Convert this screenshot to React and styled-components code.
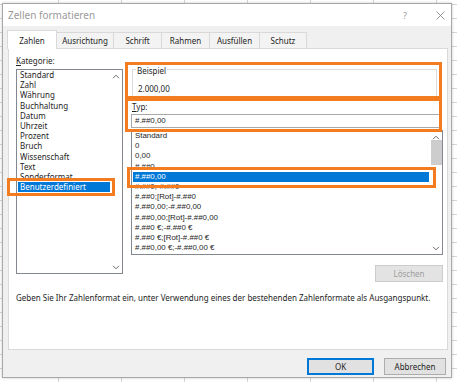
import React from 'react';
import styled, { createGlobalStyle } from 'styled-components';

const GlobalStyle = createGlobalStyle`
  html, body { margin: 0; padding: 0; }
  body {
    font-family: "Noto Sans", "Liberation Sans", sans-serif;
    color: #1e1e1e;
    -webkit-font-smoothing: antialiased;
  }
`;

const Sheet = styled.div`
  position: relative;
  width: 457px;
  height: 382px;
  box-sizing: border-box;
  padding: 3px 5px 4px 2px;
  overflow: hidden;
  background-color: #fff;
  background-image:
    repeating-linear-gradient(90deg, transparent 0 58px, #d6d6d6 58px 59px, transparent 59px 63px),
    repeating-linear-gradient(0deg, transparent 0 13px, #d6d6d6 13px 14px);
  display: flex;
`;

const Dialog = styled.div`
  flex: 1;
  display: flex;
  flex-direction: column;
  background: #f0f0f0;
  border: 1px solid #a8a8a8;
  box-shadow: 0 0 3px rgba(0, 0, 0, 0.2);
`;

const TitleBar = styled.div`
  height: 22px;
  background: #fff;
  display: flex;
  align-items: center;
  padding: 0 6px 0 5px;
`;

const Title = styled.div`
  flex: 1;
  font-size: 10px;
  color: #9b9b9b;
`;

const Help = styled.span`
  font-size: 9px;
  color: #a0a0a0;
  margin-right: 29px;
`;

const Tabs = styled.div`
  display: flex;
  align-items: flex-end;
  margin-top: 4px;
  padding-left: 5px;
  height: 18px;
  position: relative;
  z-index: 1;
`;

const Tab = styled.div`
  box-sizing: border-box;
  width: ${p => p.$w}px;
  height: ${p => (p.$active ? 19 : 16)}px;
  margin-bottom: ${p => (p.$active ? -1 : 0)}px;
  display: flex;
  align-items: center;
  justify-content: center;
  font-size: 8px;
  background: ${p => (p.$active ? '#fff' : '#f3f3f3')};
  border: 1px solid #d9d9d9;
  border-bottom: none;
  margin-left: -1px;
`;

const Panel = styled.div`
  height: 302px;
  box-sizing: border-box;
  margin: 0 3px 0 5px;
  background: #fff;
  border: 1px solid #d9d9d9;
  padding: 6px 4px 0 7px;
`;

const Columns = styled.div`
  display: grid;
  grid-template-columns: 107px 312px;
  column-gap: 8px;
`;

const Column = styled.div`
  display: flex;
  flex-direction: column;
`;

const Label = styled.div`
  font-size: 8px;
  line-height: 11px;
  height: 11px;
  margin-top: ${p => p.$mt || 0}px;
  margin-bottom: ${p => p.$mb || 0}px;
  padding-left: ${p => p.$pl || 0}px;
  u { text-decoration: underline; }
`;

const ListBox = styled.div`
  position: relative;
  box-sizing: border-box;
  height: ${p => p.$h}px;
  border: 1px solid #828790;
  display: flex;
  background: #fff;
`;

const Rows = styled.div`
  flex: 1;
  padding: 0 1px;
  overflow: hidden;
`;

const Row = styled.div`
  height: 10.2px;
  line-height: 10.2px;
  padding-left: 2px;
  font-size: ${p => (p.$mono ? 7.9 : 8)}px;
  font-family: ${p => (p.$mono ? '"Liberation Sans", Arial, sans-serif' : 'inherit')};
  white-space: nowrap;
  background: ${p => (p.$sel ? '#0078d7' : 'transparent')};
  color: ${p => (p.$sel ? '#fff' : '#1e1e1e')};
  width: ${p => (p.$sel && p.$selW ? `${p.$selW}px` : 'auto')};
`;

const ScrollBar = styled.div`
  width: 12px;
  display: flex;
  flex-direction: column;
  align-items: center;
  justify-content: space-between;
  padding: 4px 0 3px;
`;

const Thumb = styled.div`
  width: 11px;
  flex: 0 0 25px;
  background: #cdcdcd;
`;

const Spacer = styled.div`
  flex: 1;
`;

const GroupBox = styled.div`
  box-sizing: border-box;
  height: 28px;
  margin: 14px 6px 0 1px;
  padding: 0 5px;
  border: 1px solid #dcdcdc;
`;

const Legend = styled.div`
  width: fit-content;
  margin: -4px 0 0 -2px;
  padding: 0 1px;
  background: #fff;
  font-size: 8px;
  line-height: 10px;
`;

const Value = styled.div`
  font-size: 8px;
  line-height: 10px;
  margin-top: 8px;
`;

const Input = styled.div`
  box-sizing: border-box;
  height: 14px;
  width: 310px;
  border: 1px solid #a9a9a9;
  font-family: "Liberation Sans", Arial, sans-serif;
  font-size: 7.9px;
  line-height: 12px;
  padding-left: 3px;
  margin-bottom: 2px;
`;

const Button = styled.div`
  box-sizing: border-box;
  width: ${p => p.$w}px;
  height: 17px;
  display: flex;
  align-items: center;
  justify-content: center;
  font-size: 8px;
  background: ${p => (p.$disabled ? '#e3e3e3' : '#e1e1e1')};
  color: ${p => (p.$disabled ? '#9d9d9d' : '#1e1e1e')};
  border: 1px solid ${p => (p.$primary ? '#0078d7' : p.$disabled ? '#cccccc' : '#adadad')};
  box-shadow: ${p => (p.$primary ? 'inset 0 0 0 1px #0078d7' : 'none')};
`;

const ButtonRow = styled.div`
  display: flex;
  justify-content: flex-end;
  margin-top: 10px;
`;

const Hint = styled.div`
  font-size: 8px;
  line-height: 11px;
  margin-top: 10px;
`;

const Footer = styled.div`
  flex: 1;
  display: flex;
  justify-content: flex-end;
  align-items: flex-start;
  gap: 10px;
  padding: 8px 5px 0 0;
`;

const Mark = styled.div`
  position: absolute;
  left: ${p => p.$x}px;
  top: ${p => p.$y}px;
  width: ${p => p.$w}px;
  height: ${p => p.$h}px;
  box-sizing: border-box;
  border: 3px solid #f37c21;
  pointer-events: none;
`;

const Chevron = ({ up }) => (
  <svg width="8" height="5" viewBox="0 0 8 5">
    <path
      d={up ? 'M1 4.2 L4 1.2 L7 4.2' : 'M1 0.8 L4 3.8 L7 0.8'}
      fill="none"
      stroke="#6a6a6a"
      strokeWidth="1"
    />
  </svg>
);

const CloseIcon = () => (
  <svg width="9" height="9" viewBox="0 0 9 9">
    <path d="M0.5 0.5 L8.5 8.5 M8.5 0.5 L0.5 8.5" stroke="#8a8a8a" strokeWidth="0.9" />
  </svg>
);

const tabs = [
  ['Zahlen', 50],
  ['Ausrichtung', 58],
  ['Schrift', 49],
  ['Rahmen', 49],
  ['Ausfüllen', 51],
  ['Schutz', 48],
];

const categories = [
  'Standard', 'Zahl', 'Währung', 'Buchhaltung', 'Datum', 'Uhrzeit', 'Prozent',
  'Bruch', 'Wissenschaft', 'Text', 'Sonderformat', 'Benutzerdefiniert',
];

const formats = [
  'Standard', '0', '0,00', '#.##0', '#.##0,00', '#.##0;-#.##0', '#.##0;[Rot]-#.##0',
  '#.##0,00;-#.##0,00', '#.##0,00;[Rot]-#.##0,00', '#.##0 €;-#.##0 €',
  '#.##0 €;[Rot]-#.##0 €', '#.##0,00 €;-#.##0,00 €',
];

export default function App() {
  return (
    <>
      <GlobalStyle />
      <Sheet>
        <Dialog>
          <TitleBar>
            <Title>Zellen formatieren</Title>
            <Help>?</Help>
            <CloseIcon />
          </TitleBar>
          <Tabs>
            {tabs.map(([name, w], i) => (
              <Tab key={name} $w={w} $active={i === 0}>{name}</Tab>
            ))}
          </Tabs>
          <Panel>
            <Columns>
              <Column>
                <Label $mb={3}><u>K</u>ategorie:</Label>
                <ListBox $h={205}>
                  <Rows>
                    {categories.map((c, i) => (
                      <Row key={c} $sel={i === 11} $selW={93}>{c}</Row>
                    ))}
                  </Rows>
                  <ScrollBar>
                    <Chevron up />
                    <Chevron />
                  </ScrollBar>
                </ListBox>
              </Column>
              <Column>
                <GroupBox>
                  <Legend>Beispiel</Legend>
                  <Value>2.000,00</Value>
                </GroupBox>
                <Label $mt={4} $mb={2} $pl={1}><u>T</u>yp:</Label>
                <Input>#.##0,00</Input>
                <ListBox $h={125}>
                  <Rows>
                    {formats.map((f, i) => (
                      <Row key={f} $mono $sel={i === 4}>{f}</Row>
                    ))}
                  </Rows>
                  <ScrollBar>
                    <Chevron up />
                    <Thumb />
                    <Spacer />
                    <Chevron />
                  </ScrollBar>
                </ListBox>
                <ButtonRow>
                  <Button $w={68} $disabled>Löschen</Button>
                </ButtonRow>
              </Column>
            </Columns>
            <Hint>
              Geben Sie Ihr Zahlenformat ein, unter Verwendung eines der bestehenden Zahlenformate als Ausgangspunkt.
            </Hint>
          </Panel>
          <Footer>
            <Button $w={67} $primary>OK</Button>
            <Button $w={62}>Abbrechen</Button>
          </Footer>
        </Dialog>
        <Mark $x={125} $y={62} $w={317} $h={37} />
        <Mark $x={125} $y={98} $w={317} $h={34} />
        <Mark $x={127} $y={167} $w={309} $h={21} />
        <Mark $x={7} $y={178} $w={108} $h={18} />
      </Sheet>
    </>
  );
}
